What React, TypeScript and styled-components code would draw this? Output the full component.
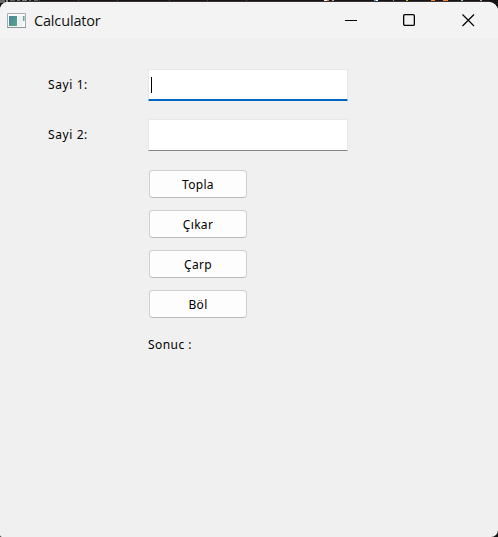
import React from "react";
import styled, { createGlobalStyle } from "styled-components";

const GlobalStyle = createGlobalStyle`
  * { box-sizing: border-box; }
  body { margin: 0; background: #151314; overflow: hidden; }
`;

const Desktop = styled.div`
  position: relative;
  width: 498px;
  height: 537px;
  padding-top: 2px;
  background: #151314;
`;

const Backdrop = styled.svg`
  position: absolute;
  top: 0;
  left: 0;
`;

const Window = styled.main`
  position: relative;
  height: 535px;
  display: flex;
  flex-direction: column;
  overflow: hidden;
  border-radius: 8px 9px 7px 2px;
  background: #f0f0f0;
  color: #000;
  font: 12px/16px "Noto Sans", sans-serif;
  letter-spacing: 0.2px;
`;

const TitleBar = styled.header`
  display: flex;
  align-items: center;
  height: 37px;
  flex: none;
  padding-left: 7px;
  background: #f3f3f3;
`;

const Title = styled.h1`
  flex: 1;
  margin: 0 0 0 8px;
  font: 400 14.5px/20px "Open Sans", sans-serif;
  letter-spacing: -0.16px;
  color: #111;
`;

const WindowButton = styled.button`
  display: grid;
  place-items: center;
  width: 59px;
  height: 37px;
  padding: 0;
  border: 0;
  background: transparent;
`;

const Form = styled.section`
  display: flex;
  flex-direction: column;
  padding: 30px 0 0 48px;
`;

const Row = styled.label`
  display: flex;
  align-items: center;
  height: 32px;
  margin-bottom: 18px;
`;

const Caption = styled.span`
  width: 100px;
  letter-spacing: 0.6px;
`;

const Field = styled.span<{ $active?: boolean }>`
  display: flex;
  align-items: center;
  width: 200px;
  height: 32px;
  padding-left: 2px;
  border: 1px solid ${(p) => (p.$active ? "#e4e7eb" : "#e9e9e9")};
  border-bottom: ${(p) => (p.$active ? "2px solid #0067c0" : "1px solid #868686")};
  border-radius: 1px;
  background: #fff;
`;

const Caret = styled.i`
  width: 1px;
  height: 16px;
  background: #000;
`;

const Actions = styled.div`
  display: flex;
  flex-direction: column;
  gap: 12px;
  margin: 1px 0 19px 101px;
`;

const ActionButton = styled.button`
  width: 98px;
  height: 28px;
  padding: 2px 0 0;
  border: 1px solid #d0d0d0;
  border-bottom-color: #bababa;
  border-radius: 4px;
  background: #fdfdfd;
  color: #000;
  font: inherit;
  letter-spacing: 0.3px;
`;

const Result = styled.output`
  margin-left: 100px;
  letter-spacing: 0.45px;
`;

const ticks: [number, number, string][] = [
  [0, 5, "#66696b"], [6, 2, "#8d9294"], [10, 5, "#596063"], [17, 3, "#687074"],
  [22, 5, "#777b7d"], [29, 2, "#686d70"], [34, 4, "#5c6163"],
  [39, 1, "#444"], [78, 1, "#444"], [117, 1, "#444"], [169, 1, "#444"],
  [207, 1, "#444"], [246, 1, "#444"],
  [324, 3, "#e9f4f6"], [327, 2, "#e4863f"], [332, 2, "#aaa"], [374, 2, "#52b9e8"],
  [376, 2, "#fff"], [393, 1, "#999"], [406, 2, "#d8bd22"], [431, 4, "#f58032"],
  [443, 5, "#f58032"], [461, 2, "#9fc9e0"], [480, 2, "#aaa"],
];

function WindowIcon() {
  return (
    <svg width="19" height="16" viewBox="0 0 19 16">
      <defs>
        <linearGradient id="pane" x1="0" y1="0" x2="1" y2="1">
          <stop stopColor="#4685a0" />
          <stop offset="1" stopColor="#59a783" />
        </linearGradient>
      </defs>
      <path d="M.5 .5h18v14H.5z" fill="#f8fafa" stroke="#a6abb5" />
      <path d="M0 14.5h19" stroke="#8d939e" />
      <path d="M2 3h8v10H2z" fill="url(#pane)" />
      <path d="M11 3h5v10h-5z" fill="#edf1f1" />
      <path d="M16 3h1.5v5H16z" fill="#65a58d" />
    </svg>
  );
}

export default function App() {
  return (
    <Desktop>
      <GlobalStyle />
      <Backdrop width="498" height="10">
        {ticks.map(([x, w, fill]) => (
          <rect key={x} x={x} width={w} height={x < 38 ? 3 : 1} fill={fill} />
        ))}
        <path d="M9 1.5h481" stroke="#393334" />
      </Backdrop>
      <Window>
        <TitleBar>
          <WindowIcon />
          <Title>Calculator</Title>
          <WindowButton aria-label="Minimize">
            <svg width="13" height="13"><path d="M1 6.5h12" stroke="#000" /></svg>
          </WindowButton>
          <WindowButton aria-label="Maximize">
            <svg width="13" height="13"><rect x=".65" y=".65" width="10.7" height="10.7" rx="1.2" fill="none" stroke="#000" strokeWidth="1.3" /></svg>
          </WindowButton>
          <WindowButton aria-label="Close">
            <svg width="13" height="13"><path d="M.5 .5l11.5 11.5M12 .5L.5 12" stroke="#000" strokeWidth="1.15" /></svg>
          </WindowButton>
        </TitleBar>
        <Form>
          <Row>
            <Caption>Sayi 1:</Caption>
            <Field $active><Caret /></Field>
          </Row>
          <Row>
            <Caption>Sayi 2:</Caption>
            <Field />
          </Row>
          <Actions>
            {["Topla", "Çıkar", "Çarp", "Böl"].map((name) => (
              <ActionButton key={name}>{name}</ActionButton>
            ))}
          </Actions>
          <Result>Sonuc :</Result>
        </Form>
      </Window>
    </Desktop>
  );
}
